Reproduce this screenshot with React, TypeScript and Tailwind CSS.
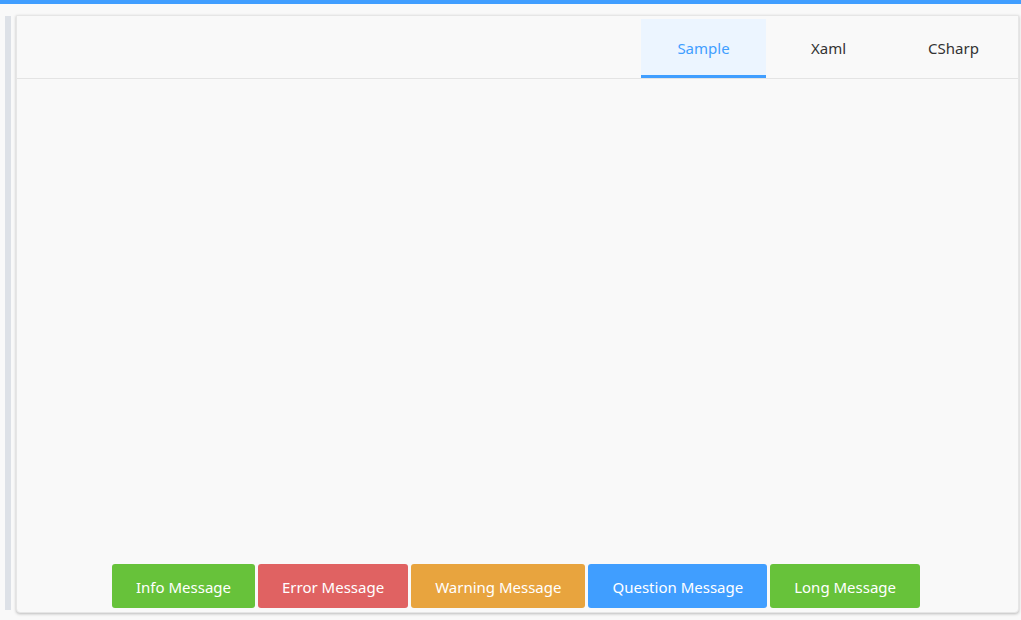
import React, { useState } from "react";

const tabs = ["Sample", "Xaml", "CSharp"];

const buttons = [
  { label: "Info Message", cls: "bg-[#67c23a]" },
  { label: "Error Message", cls: "bg-[#e06262]" },
  { label: "Warning Message", cls: "bg-[#e8a43e]" },
  { label: "Question Message", cls: "bg-[#409eff]" },
  { label: "Long Message", cls: "bg-[#67c23a]" },
];

const App: React.FC = () => {
  const [active, setActive] = useState("Sample");

  return (
    <div
      className="w-[1021px] h-[620px] bg-[#f9f9f9] flex flex-col overflow-hidden"
      style={{ fontFamily: '"Noto Sans", "Open Sans", sans-serif' }}
    >
      <div className="h-[4px] bg-[#409eff] shrink-0" />
      <div className="flex flex-1 pt-[11px] pb-[7px]">
        <div className="w-[6px] ml-[5px] mt-[1px] mb-[3px] bg-[#dde1e7]" />
        <div className="flex-1 ml-[5px] mr-[2px] flex flex-col bg-[#f9f9f9] border border-[#e6e6e6] rounded-b-[4px] shadow-[0_1px_3px_rgba(0,0,0,0.25)]">
          <div className="h-[63px] flex justify-end border-b border-[#e4e4e4] pr-[2px] pt-[3px]">
            {tabs.map((t) => (
              <button
                key={t}
                onClick={() => setActive(t)}
                className={
                  "w-[125px] text-[15px] flex items-center justify-center pt-[2px] border-b-[3px] " +
                  (active === t
                    ? "bg-[#ecf5ff] text-[#409eff] border-[#409eff]"
                    : "text-[#333333] border-transparent")
                }
              >
                {t}
              </button>
            ))}
          </div>
          <div className="flex-1" />
          <div className="flex justify-center gap-[3px] pb-[4px] pr-[3px]">
            {buttons.map((b) => (
              <button
                key={b.label}
                className={"h-[44px] px-6 pt-[2px] rounded-[3px] text-white text-[15px] " + b.cls}
              >
                {b.label}
              </button>
            ))}
          </div>
        </div>
      </div>
    </div>
  );
};

export default App;
